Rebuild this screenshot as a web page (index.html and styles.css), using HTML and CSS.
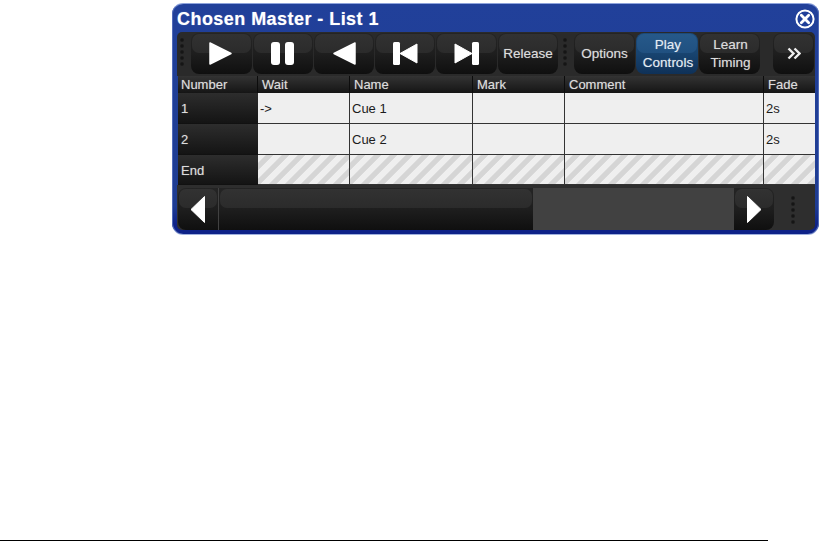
FILE: index.html
```html
<!DOCTYPE html>
<html lang="en">
<head>
    <meta charset="UTF-8">
    <meta name="viewport" content="width=device-width, initial-scale=1.0">
    <title>Chosen Master - List 1</title>
    <link rel="stylesheet" href="styles.css">
</head>
<body>
    <div class="page">
        <div class="window">
            <div class="titlebar">
                <span class="title">Chosen Master - List 1</span>
                <svg class="close" width="20" height="20" viewBox="0 0 20 20">
                    <circle cx="10" cy="10" r="8.600" fill="none" stroke="#fff" stroke-width="2"/>
                    <path d="M6.300 6.300l7.400 7.400M13.700 6.300l-7.400 7.400" stroke="#fff" stroke-width="2.800" stroke-linecap="round"/>
                </svg>
            </div>

            <div class="toolbar">
                <div class="grip grip-first"></div>
                <button class="btn btn-61">
                    <svg width="25" height="25" viewBox="0 0 25 25"><path d="M1 2l21 10.500L1 23z" fill="#fff" stroke="#fff" stroke-width="1.500" stroke-linejoin="round"/></svg>
                </button>
                <button class="btn">
                    <svg width="24" height="25" viewBox="0 0 24 25"><rect x="0" y="1" width="9" height="23" rx="3" fill="#fff"/><rect x="14" y="1" width="9" height="23" rx="3" fill="#fff"/></svg>
                </button>
                <button class="btn">
                    <svg width="25" height="25" viewBox="0 0 25 25"><path d="M23 2L2 12.500 23 23z" fill="#fff" stroke="#fff" stroke-width="1.500" stroke-linejoin="round"/></svg>
                </button>
                <button class="btn">
                    <svg width="25" height="25" viewBox="0 0 25 25"><rect x="0" y="1" width="7" height="23" rx="1.500" fill="#fff"/><path d="M24 3L7 12.500 24 22z" fill="#fff" stroke="#fff" stroke-linejoin="round"/></svg>
                </button>
                <button class="btn btn-61">
                    <svg width="25" height="25" viewBox="0 0 25 25"><path d="M1 3l17 9.500L1 22z" fill="#fff" stroke="#fff" stroke-linejoin="round"/><rect x="18" y="1" width="7" height="23" rx="1.500" fill="#fff"/></svg>
                </button>
                <button class="btn">Release</button>
                <div class="grip grip-mid"></div>
                <button class="btn btn-61">Options</button>
                <button class="btn btn-62 btn-active">Play<br>Controls</button>
                <button class="btn btn-61 btn-learn">Learn<br>Timing</button>
                <button class="btn btn-more">
                    <svg width="14" height="13" viewBox="0 0 14 13"><path d="M1.500 1.500l5 5-5 5M7.500 1.500l5 5-5 5" fill="none" stroke="#eee" stroke-width="2.400"/></svg>
                </button>
            </div>

            <table class="cues">
                <colgroup>
                    <col class="col-number">
                    <col class="col-wait">
                    <col class="col-name">
                    <col class="col-mark">
                    <col class="col-comment">
                    <col class="col-fade">
                </colgroup>
                <thead>
                    <tr>
                        <th class="th-number">Number</th>
                        <th>Wait</th>
                        <th>Name</th>
                        <th>Mark</th>
                        <th>Comment</th>
                        <th>Fade</th>
                    </tr>
                </thead>
                <tbody>
                    <tr>
                        <td class="num">1</td>
                        <td>-&gt;</td>
                        <td>Cue 1</td>
                        <td></td>
                        <td></td>
                        <td>2s</td>
                    </tr>
                    <tr>
                        <td class="num">2</td>
                        <td></td>
                        <td>Cue 2</td>
                        <td></td>
                        <td></td>
                        <td>2s</td>
                    </tr>
                    <tr class="end">
                        <td class="num">End</td>
                        <td class="hatch"></td>
                        <td class="hatch"></td>
                        <td class="hatch"></td>
                        <td class="hatch"></td>
                        <td class="hatch"></td>
                    </tr>
                </tbody>
            </table>

            <div class="scrollbar">
                <button class="scroll-btn scroll-left">
                    <svg width="16" height="29" viewBox="0 0 16 29"><path d="M14.500 1.500v26L1 14.500z" fill="#fff" stroke="#fff" stroke-linejoin="round"/></svg>
                </button>
                <div class="track">
                    <div class="thumb"></div>
                </div>
                <button class="scroll-btn scroll-right">
                    <svg width="16" height="29" viewBox="0 0 16 29"><path d="M1.500 1.500v26L15 14.500z" fill="#fff" stroke="#fff" stroke-linejoin="round"/></svg>
                </button>
                <div class="grip grip-scroll"></div>
            </div>
        </div>

        <div class="rule"></div>
    </div>
</body>
</html>
```

FILE: styles.css
```css
* {
    box-sizing: border-box;
}

body {
    margin: 0;
    background: #fff;
    font-family: "Liberation Sans", Arial, sans-serif;
    font-size: 13px;
}

.page {
    display: flex;
    flex-direction: column;
    height: 541px;
    padding-top: 3px;
}

.window {
    width: 647px;
    height: 231px;
    margin-left: 172px;
    padding: 0 4px 4px 5px;
    background: linear-gradient(#21409a, #1e3c92 88%, #0e2288 96%);
    border-top: 1px solid #8ea3dc;
    border-radius: 11px;
    box-shadow: inset 1px 0 0 #4f69b8, inset -1px 0 0 #4f69b8, 0 1px 0 #9fb0dd;
    overflow: hidden;
}

.titlebar {
    display: flex;
    align-items: center;
    justify-content: space-between;
    height: 28px;
    padding-top: 2px;
}

.title {
    color: #fff;
    font-size: 18px;
    font-weight: bold;
    letter-spacing: 0.45px;
    text-shadow: 0 0 1px rgba(255, 255, 255, 0.5);
}

.toolbar {
    display: flex;
    align-items: flex-start;
    gap: 1px;
    height: 44px;
    padding-top: 1px;
    background: #2a2a2a;
    border-radius: 5px 5px 0 0;
}

.btn,
.scroll-btn {
    position: relative;
    display: flex;
    align-items: center;
    justify-content: center;
    padding: 0;
    border: 0;
    color: #dcdcdc;
    font-family: inherit;
    font-size: 13.500px;
    line-height: 18px;
    text-shadow: 0 0 1px rgba(220, 220, 220, 0.5);
    background: linear-gradient(#242424, #1e1e1e 50%, #0f0f0f);
    border-radius: 8px;
}

.btn {
    flex: none;
    width: 60px;
    height: 41px;
    isolation: isolate;
}

/* soft shine on the top of each button */
.btn::before,
.scroll-btn::before,
.thumb::before {
    content: "";
    position: absolute;
    top: 1px;
    left: 1px;
    right: 1px;
    height: 19px;
    background: linear-gradient(#323232, #2b2b2b);
    border-radius: 7px;
}

.btn::before {
    z-index: -1;
}

.btn svg,
.scroll-btn svg {
    position: relative;
}

.btn-61 {
    width: 61px;
}

.btn-62 {
    width: 62px;
}

.btn-active {
    padding-left: 2px;
    color: #e4ecf4;
    background: linear-gradient(#1c4a7a, #184470 50%, #0f3158);
}

.btn-active::before {
    background: linear-gradient(#26598a, #205080);
}

.btn-learn {
    padding-left: 2px;
}

.btn-more {
    width: 41px;
    margin-left: 12px;
}

.grip {
    flex: none;
    width: 6px;
    background: radial-gradient(circle at 3px 3px, #141414 0, #161616 1.200px, transparent 2.400px) 0 0 / 6px 6px repeat-y;
}

.grip-first {
    height: 30px;
    margin: 4px 5px 0 2px;
}

.grip-mid {
    height: 30px;
    margin: 4px 5px 0 3px;
}

.grip-scroll {
    height: 30px;
    margin: 7px 0 0 16px;
}

.cues {
    width: 637px;
    table-layout: fixed;
    border-collapse: separate;
    border-spacing: 0;
    margin-left: 1px;
}

.col-number { width: 80px; }
.col-wait { width: 92px; }
.col-name { width: 123px; }
.col-mark { width: 92px; }
.col-comment { width: 199px; }
.col-fade { width: 51px; }

.cues th {
    height: 17px;
    padding: 0 0 0 4px;
    color: #dcdcdc;
    font-size: 13px;
    font-weight: normal;
    text-align: left;
    text-shadow: 0 0 1px rgba(220, 220, 220, 0.5);
    background: linear-gradient(#333, #151515);
    border-right: 1px solid #0c0c0c;
}

.cues th.th-number {
    padding-left: 3px;
}

.cues th:last-child {
    border-right: 0;
}

.cues td {
    height: 31px;
    padding: 1px 0 0 2px;
    color: #1c1c1c;
    font-size: 13px;
    background: #efefef;
    border-right: 1px solid #333;
    border-bottom: 1px solid #333;
}

.cues td:last-child {
    border-right: 0;
}

.cues .end td {
    height: 30px;
}

.cues td.num {
    padding-left: 3px;
    color: #dcdcdc;
    text-shadow: 0 0 1px rgba(220, 220, 220, 0.5);
    background: linear-gradient(#2d2d2d, #141414);
    border-right: 0;
    border-bottom: 1px solid #111;
}

.cues td.hatch {
    background: repeating-linear-gradient(135deg, #efefef 0, #efefef 5.200px, #d5d5d5 6px, #d5d5d5 10.500px, #efefef 11.300px);
}

.scrollbar {
    display: flex;
    align-items: flex-start;
    height: 45px;
    padding: 3px 0 0 1px;
    background: #2e2e2e;
    border-radius: 0 0 5px 5px;
}

.scroll-btn {
    flex: none;
    width: 40px;
    height: 42px;
    border-radius: 8px 0 0 8px;
}

.scroll-right {
    border-radius: 0 8px 8px 0;
}

.track {
    flex: none;
    width: 516px;
    height: 42px;
    background: #414141;
}

.thumb {
    position: relative;
    width: 314px;
    height: 100%;
    margin-left: 1px;
    background: linear-gradient(#242424, #1e1e1e 50%, #0f0f0f);
}

.rule {
    width: 768px;
    height: 1px;
    margin-top: auto;
    background: #000;
}
```
